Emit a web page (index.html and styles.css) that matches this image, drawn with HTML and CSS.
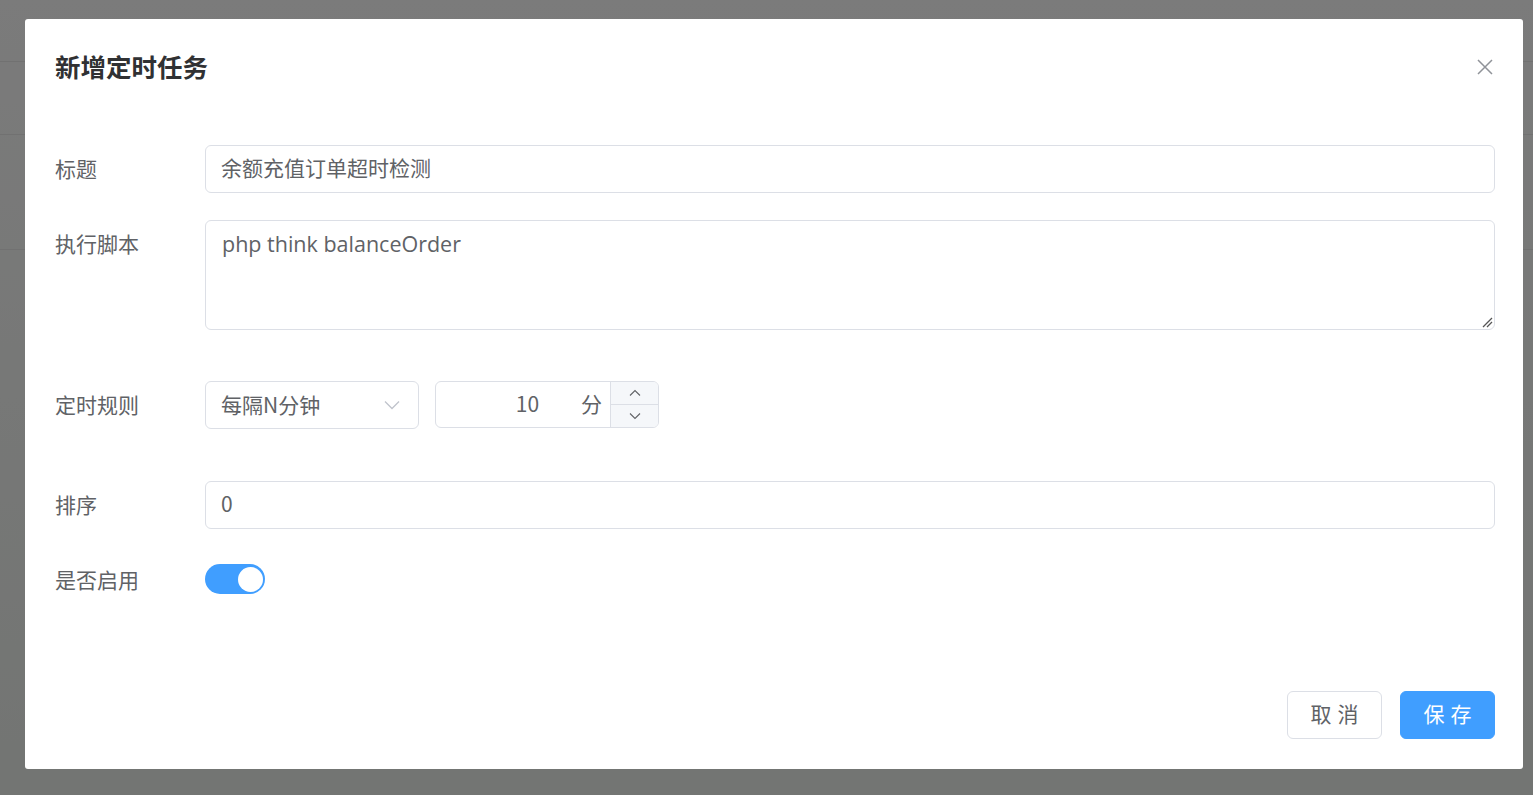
FILE: index.html
```
<!DOCTYPE html>
<html lang="zh-CN">
<head>
  <meta charset="UTF-8">
  <title>新增定时任务</title>
  <link rel="stylesheet" href="styles.css">
</head>
<body>
  <!-- underlying page (list behind the modal) -->
  <div class="page">
    <div class="page-row row-head"></div>
    <div class="page-row row-tools"></div>
    <div class="page-row row-table"></div>
  </div>

  <!-- modal -->
  <div class="mask">
    <div class="dialog">
      <div class="dialog-header">
        <span class="dialog-title">新增定时任务</span>
        <button class="dialog-close" aria-label="关闭">
          <svg width="16" height="16" viewBox="0 0 16 16"><path d="M1 1 L15 15 M15 1 L1 15" stroke="#909399" stroke-width="1.5" fill="none"/></svg>
        </button>
      </div>

      <div class="dialog-body">
        <div class="form-item">
          <label class="form-label">标题</label>
          <div class="input">余额充值订单超时检测</div>
        </div>

        <div class="form-item item-script">
          <label class="form-label">执行脚本</label>
          <div class="textarea">php think balanceOrder
            <svg class="resize" width="12" height="12" viewBox="0 0 12 12"><path d="M2 11 L11 2 M6 11 L11 6" stroke="#555" stroke-width="1.3" fill="none"/></svg>
          </div>
        </div>

        <div class="form-item item-rule">
          <label class="form-label">定时规则</label>
          <div class="rule">
            <div class="select">
              <span>每隔N分钟</span>
              <svg width="16" height="10" viewBox="0 0 16 10"><path d="M1 1.5 L8 8.5 L15 1.5" stroke="#c0c4cc" stroke-width="1.3" fill="none"/></svg>
            </div>
            <div class="number">
              <span class="number-value">10</span>
              <span class="number-unit">分</span>
              <div class="spinner">
                <div class="spin-btn"><svg width="12" height="8" viewBox="0 0 12 8"><path d="M1 6.5 L6 1.5 L11 6.5" stroke="#606266" stroke-width="1.1" fill="none"/></svg></div>
                <div class="spin-btn"><svg width="12" height="8" viewBox="0 0 12 8"><path d="M1 1.5 L6 6.5 L11 1.5" stroke="#606266" stroke-width="1.1" fill="none"/></svg></div>
              </div>
            </div>
          </div>
        </div>

        <div class="form-item">
          <label class="form-label">排序</label>
          <div class="input">0</div>
        </div>

        <div class="form-item">
          <label class="form-label">是否启用</label>
          <div class="switch-wrap">
            <span class="switch"><span class="switch-knob"></span></span>
          </div>
        </div>
      </div>

      <div class="dialog-footer">
        <button class="btn">取消</button>
        <button class="btn btn-primary">保存</button>
      </div>
    </div>
  </div>
</body>
</html>
```

FILE: styles.css
```
* {
  margin: 0;
  padding: 0;
  box-sizing: border-box;
}

body {
  font-family: "Noto Sans CJK SC", "Noto Sans", sans-serif;
  color: #606266;
  height: 100vh;
  overflow: hidden;
  background: linear-gradient(#f6f6f6, #e6eae6);
}

/* page behind the modal */
.page-row {
  border-bottom: 1px solid #e2e2e2;
}

.row-head { height: 62px; }
.row-tools { height: 73px; }
.row-table { height: 115px; }

.mask {
  position: fixed;
  inset: 0;
  background: rgba(0, 0, 0, 0.5);
  padding: 19px 10px 0 25px;
}

.dialog {
  width: 1498px;
  height: 750px;
  background: #fff;
  border-radius: 3px;
  display: flex;
  flex-direction: column;
  padding: 0 28px 30px 30px;
}

.dialog-header {
  display: flex;
  justify-content: space-between;
  align-items: flex-start;
  padding-top: 30px;
  height: 96px;
}

.dialog-title {
  font-size: 25.5px;
  font-weight: bold;
  color: #303133;
  line-height: 34px;
}

.dialog-close {
  border: none;
  background: none;
  margin: 10px 2px 0 0;
  width: 16px;
  height: 16px;
  display: flex;
}

.dialog-body {
  flex: 1;
  padding-top: 30px;
}

.form-item {
  display: grid;
  grid-template-columns: 150px 1fr;
  margin-bottom: 27px;
}

.form-label {
  font-size: 21px;
  line-height: 46px;
  color: #606266;
}

.input {
  height: 48px;
  border: 1px solid #dcdfe6;
  border-radius: 6px;
  font-size: 21px;
  line-height: 43px;
  padding: 0 15px;
  color: #606266;
}

.item-script { margin-bottom: 51px; }

.textarea {
  position: relative;
  height: 110px;
  border: 1px solid #dcdfe6;
  border-radius: 6px;
  font-family: "Open Sans", "Noto Sans", sans-serif;
  font-size: 21.5px;
  line-height: 32px;
  padding: 7px 16px;
  color: #606266;
}

.resize {
  position: absolute;
  right: 1px;
  bottom: 1px;
}

.item-rule { margin-bottom: 52px; }

.rule {
  display: flex;
  gap: 16px;
  height: 48px;
}

.select {
  width: 214px;
  border: 1px solid #dcdfe6;
  border-radius: 6px;
  display: flex;
  align-items: center;
  justify-content: space-between;
  padding: 0 18px 2px 15px;
  font-size: 21px;
}

.select svg {
  margin-top: 2px;
}

.number {
  width: 224px;
  height: 47px;
  border: 1px solid #dcdfe6;
  border-radius: 6px;
  display: flex;
  align-items: center;
  overflow: hidden;
  font-size: 21px;
}

.number-value {
  flex: 1;
  text-align: center;
  padding-left: 38px;
  margin-bottom: 3px;
}

.number-unit {
  margin: 0 8px 3px 0;
}

.spinner {
  width: 48px;
  height: 100%;
  border-left: 1px solid #dcdfe6;
  display: flex;
  flex-direction: column;
}

.spin-btn {
  flex: 1;
  background: #f5f7fa;
  display: flex;
  align-items: center;
  justify-content: center;
}

.spin-btn + .spin-btn {
  border-top: 1px solid #dcdfe6;
}

.switch-wrap {
  display: flex;
  align-items: center;
  height: 46px;
}

.switch {
  width: 60px;
  height: 30px;
  border-radius: 15px;
  background: #409eff;
  display: flex;
  align-items: center;
  justify-content: flex-end;
  padding-right: 2px;
}

.switch-knob {
  width: 25px;
  height: 25px;
  border-radius: 50%;
  background: #fff;
}

.dialog-footer {
  display: flex;
  justify-content: flex-end;
  gap: 18px;
}

.btn {
  width: 95px;
  height: 48px;
  border: 1px solid #dcdfe6;
  border-radius: 6px;
  background: #fff;
  color: #606266;
  font-family: "Noto Sans CJK SC", sans-serif;
  font-size: 21px;
  letter-spacing: 6px;
  padding: 0 0 5px 6px;
}

.btn-primary {
  background: #409eff;
  border-color: #409eff;
  color: #fff;
}
```
